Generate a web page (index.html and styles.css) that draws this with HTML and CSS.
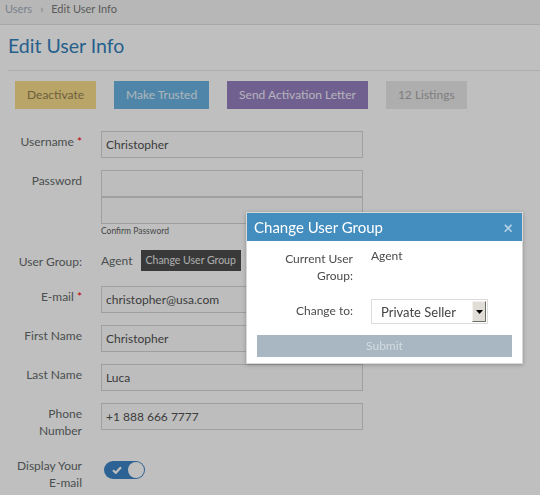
FILE: index.html
```html
<!DOCTYPE html>
<html>
<head>
<meta charset="utf-8">
<link rel="stylesheet" href="styles.css">
</head>
<body>
<div class="crumbs"><span class="crumb-link">Users</span><span class="crumb-sep">›</span><span class="crumb-cur">Edit User Info</span></div>
<div class="page">
  <h1 class="title">Edit User Info</h1>
  <div class="actions">
    <span class="btn btn-yellow">Deactivate</span>
    <span class="btn btn-blue">Make Trusted</span>
    <span class="btn btn-purple">Send Activation Letter</span>
    <span class="btn btn-gray">12 Listings</span>
  </div>
  <div class="form">
    <div class="row">
      <div class="label">Username <span class="req">*</span></div>
      <div class="field"><div class="input">Christopher</div></div>
    </div>
    <div class="row">
      <div class="label">Password</div>
      <div class="field">
        <div class="input"></div>
        <div class="input"></div>
        <div class="hint">Confirm Password</div>
      </div>
    </div>
    <div class="row row-group">
      <div class="label">User Group:</div>
      <div class="field group-field"><span class="group-name">Agent</span><span class="btn-dark">Change User Group</span></div>
    </div>
    <div class="row">
      <div class="label">E-mail <span class="req">*</span></div>
      <div class="field"><div class="input">christopher@usa.com</div></div>
    </div>
    <div class="row">
      <div class="label">First Name</div>
      <div class="field"><div class="input">Christopher</div></div>
    </div>
    <div class="row">
      <div class="label">Last Name</div>
      <div class="field"><div class="input">Luca</div></div>
    </div>
    <div class="row">
      <div class="label">Phone Number</div>
      <div class="field"><div class="input">+1 888 666 7777</div></div>
    </div>
    <div class="row">
      <div class="label">Display Your E-mail</div>
      <div class="field">
        <div class="toggle">
          <svg class="check" width="10" height="8" viewBox="0 0 10 8"><path d="M1 4.2 L3.8 6.8 L9 1.2" fill="none" stroke="#fff" stroke-width="2.2"/></svg>
          <span class="knob"></span>
        </div>
      </div>
    </div>
  </div>
</div>
<div class="overlay"></div>
<div class="modal">
  <div class="modal-head"><span class="modal-title">Change User Group</span><span class="modal-close">×</span></div>
  <div class="modal-body">
    <div class="mrow">
      <div class="mlabel">Current User Group:</div>
      <div class="mvalue">Agent</div>
    </div>
    <div class="mrow mrow-select">
      <div class="mlabel">Change to:</div>
      <div class="select"><span class="select-text">Private Seller</span><span class="select-arrow"><svg width="7" height="4" viewBox="0 0 7 4"><path d="M0 0 H7 L3.5 4 Z" fill="#000"/></svg></span></div>
    </div>
    <div class="submit">Submit</div>
  </div>
</div>
</body>
</html>
```
FILE: styles.css
```css
html, body {
  margin: 0;
  padding: 0;
  overflow: hidden;
  background: #fff;
  font-family: Lato, "Open Sans", sans-serif;
  font-size: 12px;
}

.crumbs {
  height: 24px;
  background: #f4f4f4;
  border-bottom: 1px solid #e0e0e0;
  padding-left: 5px;
  font-size: 11px;
  line-height: 17px;
  display: flex;
  gap: 8px;
}
.crumb-link { color: #a3aebb; }
.crumb-sep { color: #a3aebb; }
.crumb-cur { color: #7a7a7a; }

.page {
  padding-left: 8px;
}

.title {
  margin: 9px 0 0 0;
  padding-bottom: 12px;
  border-bottom: 1px solid #e8e8e8;
  font-size: 19.5px;
  line-height: 24px;
  font-weight: normal;
  color: #3380bb;
}

.actions {
  display: flex;
  gap: 18px;
  margin-top: 10px;
  padding-left: 7px;
}
.btn {
  height: 28px;
  line-height: 28px;
  padding: 0 12px;
  font-size: 12px;
}
.btn-yellow { background: #f7dd8a; color: #937f52; }
.btn-blue { background: #6ab2e2; color: #e6f2fa; }
.btn-purple { background: #9480bf; color: #f2eefc; }
.btn-gray { background: #e9e9e9; color: #a8a8a8; }

.form {
  margin-top: 22px;
}
.row {
  display: grid;
  grid-template-columns: 74px 262px;
  column-gap: 19px;
  margin-bottom: 12px;
}
.label {
  text-align: right;
  color: #646a6a;
  line-height: 17px;
  padding-top: 2px;
  padding-bottom: 4px;
}
.req { color: #f00; }
.input {
  height: 25px;
  line-height: 25px;
  border: 1px solid #d4d4d4;
  background: #fdfdfd;
  padding-left: 4px;
  color: #505050;
}
.hint {
  font-size: 8.5px;
  line-height: 14px;
  color: #5d5d5d;
}
.row-group .label { padding-top: 3px; }
.group-field {
  display: flex;
  align-items: center;
  gap: 8px;
  height: 21px;
}
.group-name { color: #646a6a; line-height: 17px; }
.btn-dark {
  background: #4d4d4d;
  color: #e6e6e6;
  font-size: 10.5px;
  height: 21px;
  line-height: 20px;
  padding: 0 5px;
}

.toggle {
  margin-top: 6px;
  margin-left: 3px;
  width: 41px;
  height: 18px;
  border-radius: 9px;
  background: #3d85c6;
  display: flex;
  align-items: center;
  justify-content: space-between;
  padding: 0 1px 0 8px;
  box-sizing: border-box;
}
.knob {
  width: 16px;
  height: 16px;
  border-radius: 50%;
  background: #fff;
}

.overlay {
  position: fixed;
  inset: 0;
  background: rgba(0, 0, 0, 0.25);
}

.modal {
  position: absolute;
  left: 246px;
  top: 212px;
  width: 275px;
  background: #fff;
  border: 1px solid #d8d8d8;
  box-shadow: 0 1px 4px rgba(0, 0, 0, 0.25);
}
.modal-head {
  height: 28px;
  background: #438dbf;
  display: flex;
  align-items: center;
  justify-content: space-between;
  padding: 0 9px 0 7px;
}
.modal-title {
  color: #fff;
  font-size: 15px;
}
.modal-close {
  color: rgba(255, 255, 255, 0.6);
  font-size: 17px;
  font-weight: bold;
}
.modal-body {
  padding: 6px 10px 6px 10px;
}
.mrow {
  display: grid;
  grid-template-columns: 96px 117px;
  column-gap: 18px;
}
.mlabel {
  text-align: right;
  color: #4b4b4b;
  line-height: 17px;
  padding-top: 3px;
  padding-left: 14px;
}
.mvalue {
  color: #4b4b4b;
  line-height: 17px;
}
.mrow-select {
  margin-top: 15px;
}
.mrow-select .mlabel { padding-top: 3px; }
.select {
  height: 23px;
  border: 1px solid #dcdcdc;
  display: flex;
  align-items: center;
  justify-content: space-between;
  padding-left: 9px;
  padding-right: 1px;
  color: #444;
  font-size: 13px;
}
.select-arrow {
  width: 12px;
  height: 19px;
  background: #e0ddd6;
  border: 1px solid;
  border-color: #f4f2ee #6d6b66 #6d6b66 #f4f2ee;
  display: flex;
  align-items: center;
  justify-content: center;
}
.submit {
  margin-top: 11px;
  height: 22px;
  line-height: 22px;
  background: #a9b7c2;
  color: #d3dbe1;
  text-align: center;
}
```
